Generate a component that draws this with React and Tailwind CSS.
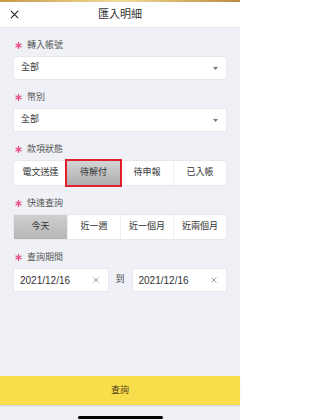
import React, { useState } from "react";

const FONT = "font-['Liberation_Sans','Noto_Sans_CJK_TC',sans-serif]";

const Star = () => (
  <svg width="7" height="7" viewBox="0 0 10 10" className="shrink-0">
    <g stroke="#ea4a7e" strokeWidth="1.8" strokeLinecap="round">
      <line x1="5" y1="0.8" x2="5" y2="9.2" />
      <line x1="1.4" y1="2.9" x2="8.6" y2="7.1" />
      <line x1="1.4" y1="7.1" x2="8.6" y2="2.9" />
    </g>
  </svg>
);

const Label = ({ children }) => (
  <div className="mt-[11px] h-[12px] flex items-center gap-[5px] pl-[2px]">
    <Star />
    <span className="text-[9px] leading-[12px] text-[#555]">{children}</span>
  </div>
);

const Select = ({ value }) => (
  <div className="mt-[5px] h-[24px] bg-white border border-[#e8e8ec] rounded-[2px] flex items-center justify-between pl-[7px] pr-[8px]">
    <span className="text-[9px] text-[#333]">{value}</span>
    <svg width="5" height="3" viewBox="0 0 5 3">
      <path d="M0 0 H5 L2.5 3 Z" fill="#777" />
    </svg>
  </div>
);

const Segments = ({ items, active, boxed }) => (
  <div className="mt-[5px] h-[26px] bg-white border border-[#e8e8ec] rounded-[2px] grid grid-cols-4">
    {items.map((it, i) => {
      const on = i === active;
      let cls = "text-[#333]";
      if (on && boxed)
        cls =
          "bg-gradient-to-b from-[#d4d4d4] to-[#aeaeae] ring-2 ring-[#e0202c] text-[#333] relative z-10";
      else if (on) cls = "bg-gradient-to-b from-[#cfcfcf] to-[#b6b6b6] text-[#333]";
      else if (i > 0) cls = "text-[#333] border-l border-[#eeeef0]";
      return (
        <div key={it} className={`flex items-center justify-center text-[9px] ${cls}`}>
          {it}
        </div>
      );
    })}
  </div>
);

const DateBox = ({ value }) => (
  <div className="flex-1 h-[24px] bg-white border border-[#e8e8ec] rounded-[2px] flex items-center justify-between pl-[6px] pr-[9px]">
    <span className="text-[10px] text-[#333]">{value}</span>
    <svg width="6" height="6" viewBox="0 0 6 6">
      <path d="M0.5 0.5 L5.5 5.5 M5.5 0.5 L0.5 5.5" stroke="#888" strokeWidth="0.8" />
    </svg>
  </div>
);

export default function App() {
  const [status, setStatus] = useState(1);

  return (
    <div className={`w-[240px] h-[420px] bg-[#f0f1f6] flex flex-col ${FONT}`}>
      {/* top gold strip */}
      <div className="h-[2px] bg-gradient-to-r from-[#c59a45] via-[#f4dc98] to-[#b98a3c]" />

      {/* header */}
      <div className="h-[26px] bg-white border-b border-[#e6e6ea] relative flex items-center justify-center">
        <svg width="9" height="9" viewBox="0 0 10 10" className="absolute left-[10px]">
          <path d="M1 1 L9 9 M9 1 L1 9" stroke="#222" strokeWidth="1.2" />
        </svg>
        <span className="text-[11px] text-[#333]">匯入明細</span>
      </div>

      {/* form */}
      <div className="flex-1 px-[13px] flex flex-col">
        <Label>轉入帳號</Label>
        <Select value="全部" />

        <Label>幣別</Label>
        <Select value="全部" />

        <Label>款項狀態</Label>
        <Segments items={["電文送達", "待解付", "待申報", "已入帳"]} active={status} boxed />

        <Label>快速查詢</Label>
        <Segments items={["今天", "近一週", "近一個月", "近兩個月"]} active={0} />

        <Label>查詢期間</Label>
        <div className="mt-[5px] flex items-center">
          <DateBox value="2021/12/16" />
          <span className="w-[23px] text-center text-[9px] text-[#444]">到</span>
          <DateBox value="2021/12/16" />
        </div>
      </div>

      {/* submit */}
      <button
        onClick={() => setStatus(status)}
        className="h-[29px] w-full bg-[#f9de4c] shadow-[0_1px_1px_rgba(0,0,0,0.12)] text-[9px] text-[#4a3d1a]"
      >
        查詢
      </button>
      <div className="h-[15px] flex items-end justify-center pb-[1px]">
        <div className="w-[85px] h-[3px] rounded-full bg-black" />
      </div>
    </div>
  );
}
